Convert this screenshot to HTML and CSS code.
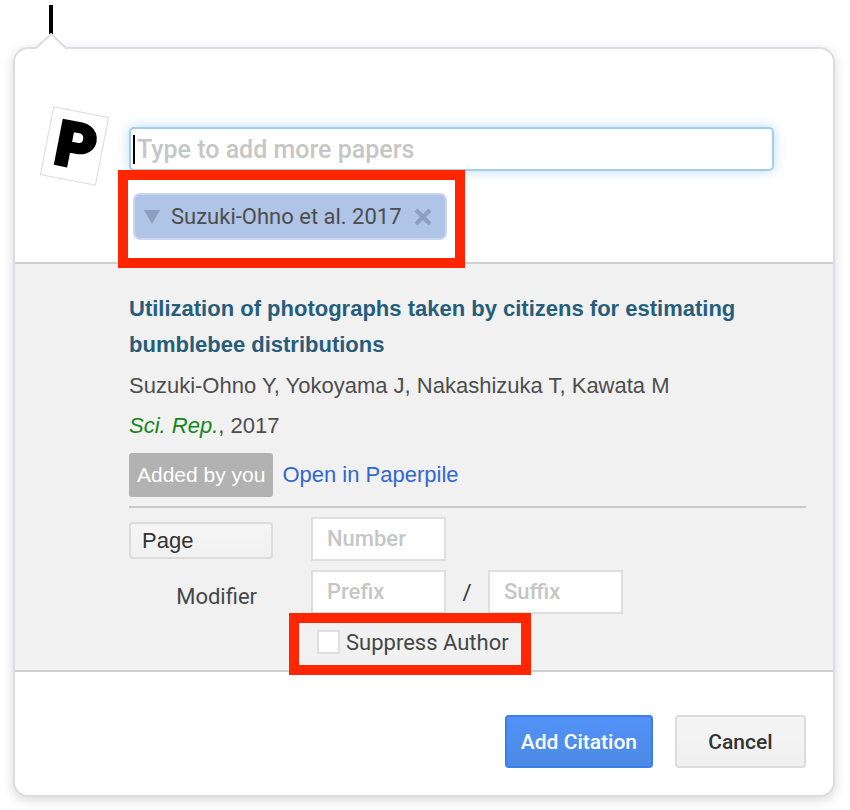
FILE: index.html
```html
<!DOCTYPE html>
<html lang="en">
<head>
<meta charset="utf-8">
<meta name="viewport" content="width=device-width, initial-scale=1">
<title>Add citation</title>
<link rel="stylesheet" href="styles.css">
</head>
<body>
<main class="dialog">
  <span class="doc-cursor"></span>
  <svg class="pointer" width="32" height="18" viewBox="0 0 32 18" aria-hidden="true">
    <path d="M1 15 L16 1 L31 15 V18 H1 Z" fill="#fff"/>
    <path d="M0 15 H1 L16 1 L31 15 H32" fill="none" stroke="#dcdde2" stroke-width="2"/>
  </svg>

  <header class="search">
    <div class="logo"><span class="logo-letter">P</span></div>
    <div class="search-column">
      <div class="search-box">
        <input class="search-input" type="text" placeholder="Type to add more papers" aria-label="Type to add more papers">
        <span class="search-caret"></span>
      </div>
      <div class="chip highlight highlight-chip">
        <svg class="chip-arrow" width="18" height="16" viewBox="0 0 18 16" aria-hidden="true"><path d="M1 1 H17 L9 15 Z" fill="#8e9fc1"/></svg>
        <span class="chip-text">Suzuki-Ohno et al. 2017</span>
        <button class="chip-remove" type="button" aria-label="Remove">
          <svg width="18" height="18" viewBox="0 0 18 18"><path d="M2 2 L16 16 M16 2 L2 16" stroke="#8e9fc1" stroke-width="4"/></svg>
        </button>
      </div>
    </div>
  </header>

  <section class="details">
    <h1 class="title">Utilization of photographs taken by citizens for estimating bumblebee distributions</h1>
    <p class="meta">Suzuki-Ohno Y, Yokoyama J, Nakashizuka T, Kawata M</p>
    <p class="meta"><em class="journal">Sci. Rep.</em>, 2017</p>
    <div class="tags">
      <span class="badge">Added by you</span>
      <a class="open-link" href="#">Open in Paperpile</a>
    </div>
    <form class="options">
      <select class="locator" aria-label="Locator"><option>Page</option></select>
      <div class="fields"><input class="field" type="text" placeholder="Number" aria-label="Number"></div>
      <label class="modifier" for="prefix">Modifier</label>
      <div class="fields">
        <input class="field" id="prefix" type="text" placeholder="Prefix">
        <span class="slash">/</span>
        <input class="field" type="text" placeholder="Suffix" aria-label="Suffix">
      </div>
      <div class="suppress-row">
        <label class="suppress highlight highlight-suppress"><input class="checkbox" type="checkbox">Suppress Author</label>
      </div>
    </form>
  </section>

  <footer class="actions">
    <button class="button primary" type="button">Add Citation</button>
    <button class="button" type="button">Cancel</button>
  </footer>
</main>
</body>
</html>
```
FILE: styles.css
```css
* {
  box-sizing: border-box;
}

body {
  margin: 0;
  padding: 47px 15px 13px 13px;
  background: #fff;
  color: #4d4d4d;
  font-family: Roboto, "Liberation Sans", sans-serif;
  font-size: 22px;
}

input, button, select {
  font: inherit;
}

.dialog {
  position: relative;
  border: 2px solid #dcdde2;
  border-radius: 15px;
  background: #fff;
  box-shadow: 0 3px 12px rgba(0, 0, 0, 0.16);
}

.doc-cursor {
  position: absolute;
  left: 34px;
  top: -44px;
  width: 4px;
  height: 29px;
  background: #000;
}

.pointer {
  position: absolute;
  left: 20px;
  top: -16px;
}

.search {
  display: flex;
  padding: 78px 59px 22px 31px;
  border-bottom: 2px solid #d0d0d0;
}

.logo {
  display: flex;
  align-items: center;
  justify-content: center;
  flex: none;
  width: 57px;
  height: 70px;
  margin: -16px 26px 0 0;
  border: 1px solid #dcdcdc;
  transform: rotate(11deg);
}

.logo-letter {
  padding-left: 3px;
  color: #000;
  font: 900 62px/68px Roboto, sans-serif;
  -webkit-text-stroke: 3px #000;
}

.search-column {
  flex: 1;
  min-width: 0;
}

.search-box {
  position: relative;
}

.search-input {
  display: block;
  width: 100%;
  height: 44px;
  padding: 0 6px;
  border: 2px solid #a2cdee;
  border-radius: 5px;
  background: #fff;
  box-shadow: 0 0 12px rgba(120, 185, 235, 0.5);
  font-size: 25px;
  outline: none;
}

::placeholder {
  color: #c6c6c6;
  font-weight: 500;
  opacity: 1;
}

.search-caret {
  position: absolute;
  left: 4px;
  top: 8px;
  width: 2px;
  height: 29px;
  background: #000;
}

.highlight {
  position: relative;
}

.highlight::after {
  content: "";
  position: absolute;
  border: 10px solid #ff2600;
  pointer-events: none;
}

.highlight-chip::after {
  inset: -25px -20px -30px -17px;
}

.chip {
  display: flex;
  align-items: center;
  width: max-content;
  height: 47px;
  margin: 22px 0 0 4px;
  padding: 0 13px 0 8px;
  border: 2px solid #c9d6ee;
  border-radius: 7px;
  background: #afc4e7;
}

.chip-text {
  margin: 0 12px 0 10px;
}

.chip-remove {
  display: flex;
  padding: 0;
  border: 0;
  background: none;
}

.details {
  padding: 27px 27px 0 114px;
  border-bottom: 2px solid #d0d0d0;
  background: #f1f1f1;
}

.title {
  margin: 0 0 3px;
  color: #265d7b;
  font: bold 22px/36px "Liberation Sans", sans-serif;
}

.meta {
  margin: 0;
  font: 22px/40px "Liberation Sans", sans-serif;
}

.journal {
  color: #14851b;
}

.tags {
  display: flex;
  align-items: center;
  gap: 9px;
  padding: 7px 0 9px;
  border-bottom: 2px solid #cacaca;
  font-family: "Liberation Sans", sans-serif;
  font-size: 22px;
}

.badge {
  padding: 0 8px;
  border-radius: 3px;
  background: #b2b2b2;
  color: #fff;
  font-size: 21px;
  line-height: 44px;
}

.open-link {
  color: #3367d0;
  text-decoration: none;
}

.options {
  display: grid;
  grid-template-columns: 144px 1fr;
  gap: 9px 38px;
  align-items: center;
  padding-top: 9px;
}

.locator {
  height: 37px;
  margin-top: 2px;
  padding: 0 11px;
  border: 2px solid #dcdcdc;
  border-radius: 4px;
  background: linear-gradient(#f5f5f5, #f1f1f1);
  color: #333;
  font-family: "Liberation Sans", sans-serif;
  appearance: none;
}

.fields {
  display: flex;
  align-items: center;
}

.field {
  width: 135px;
  height: 44px;
  padding: 0 14px 2px;
  border: 2px solid #dfdfdf;
  background: #fff;
  outline: none;
}

.slash {
  width: 42px;
  color: #333;
  text-align: center;
}

.modifier {
  justify-self: end;
  margin-right: 16px;
  padding-top: 8px;
  color: #444749;
}

.suppress-row {
  grid-column: 2;
  height: 56px;
  margin-top: -9px;
  padding: 16px 0 0 6px;
}

.suppress {
  display: flex;
  align-items: center;
  gap: 6px;
  width: max-content;
  height: 24px;
  color: #444749;
}

.highlight-suppress::after {
  inset: -17px -22px -21px -28px;
}

.checkbox {
  width: 23px;
  height: 24px;
  margin: 0;
  border: 2px solid #dfdfdf;
  background: #fff;
  appearance: none;
}

.actions {
  display: flex;
  justify-content: flex-end;
  gap: 22px;
  padding: 43px 27px 27px;
}

.button {
  height: 53px;
  min-width: 131px;
  padding: 0 14px;
  border: 2px solid #dcdcdc;
  border-radius: 4px;
  background: linear-gradient(#f5f5f5, #f0f0f0);
  color: #333;
  font-size: 21px;
  font-weight: 500;
}

.primary {
  border-color: #3b7ded;
  background: linear-gradient(#5292f7, #4d8ae5);
  color: #fff;
}
```
